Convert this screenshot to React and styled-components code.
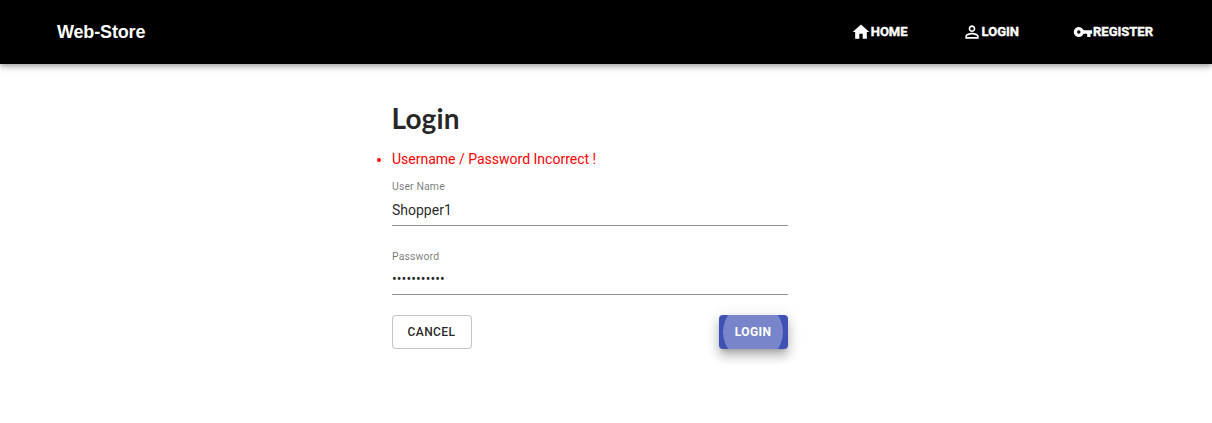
import React from "react";
import styled, { createGlobalStyle } from "styled-components";

const GlobalStyle = createGlobalStyle`
  *, *::before, *::after { box-sizing: border-box; }
  body { margin: 0; min-height: 100vh; background: #fff; color: rgba(0, 0, 0, 0.87); font-family: Roboto, sans-serif; }
`;

const AppBar = styled.header`
  display: flex;
  align-items: center;
  justify-content: space-between;
  height: 64px;
  padding: 0 59px 0 57px;
  background: #000;
  color: #fff;
  box-shadow: 0 2px 4px -1px rgba(0, 0, 0, 0.2), 0 4px 5px 0 rgba(0, 0, 0, 0.14), 0 1px 10px 0 rgba(0, 0, 0, 0.12);
`;

const Brand = styled.a`
  font: bold 18px/24px "Liberation Sans", Arial, sans-serif;
  letter-spacing: -0.15px;
`;

const Nav = styled.nav`
  display: flex;
  gap: 54px;
`;

const NavLink = styled.a`
  display: flex;
  align-items: center;
  font-size: 13px;
  font-weight: 700;
  line-height: 20px;
  text-transform: uppercase;
  -webkit-text-stroke: 0.4px currentColor;
`;

const Icon = styled.svg`
  width: 20px;
  height: 20px;
  fill: currentColor;
`;

const LoginForm = styled.form`
  width: 396px;
  margin: 0 0 0 392px;
  padding: 37px 0 40px;
`;

const Title = styled.h1`
  margin: 0;
  font: bold 28px/34px Lato, sans-serif;
  text-indent: -0.5px;
  letter-spacing: 0.15px;
`;

const Errors = styled.ul`
  margin: 14px 0 10px;
  padding: 0;
  color: #f00;
  font-size: 14px;
  line-height: 20px;
`;

const Field = styled.label`
  display: flex;
  flex-direction: column;
  margin-bottom: ${(p) => p.$gap}px;
`;

const Label = styled.span`
  padding-top: 1px;
  color: rgba(0, 0, 0, 0.54);
  font-size: 10.5px;
  line-height: 14px;
  letter-spacing: 0.1px;
`;

const Input = styled.input`
  height: ${(p) => (p.type === "password" ? 31 : 32)}px;
  padding: ${(p) => (p.type === "password" ? 0 : 1)}px 0 0;
  border: 0;
  border-bottom: 1px solid #949494;
  border-radius: 0;
  outline: 0;
  background: none;
  color: rgba(0, 0, 0, 0.87);
  font: 14px Roboto, sans-serif;
  letter-spacing: ${(p) => (p.type === "password" ? 0.08 : 0)}px;
`;

const Actions = styled.div`
  display: flex;
  justify-content: space-between;
`;

const Button = styled.button`
  position: relative;
  overflow: hidden;
  width: 80px;
  height: 34px;
  padding: 0 1px 0 0;
  border: 1px solid rgba(0, 0, 0, 0.23);
  border-radius: 4px;
  background: #fff;
  color: rgba(0, 0, 0, 0.87);
  font: 500 12px/20px Roboto, sans-serif;
  letter-spacing: 0.4px;
  text-transform: uppercase;
`;

const PrimaryButton = styled(Button)`
  width: 69px;
  border: 0;
  background: #3f51b5;
  color: #fff;
  font-weight: 700;
  box-shadow: 0 5px 5px -3px rgba(0, 0, 0, 0.2), 0 8px 10px 1px rgba(0, 0, 0, 0.14), 0 3px 14px 2px rgba(0, 0, 0, 0.12);
`;

const Ripple = styled.span`
  position: absolute;
  top: 50%;
  left: 50%;
  width: 60px;
  height: 60px;
  margin: -30px 0 0 -30.5px;
  border-radius: 50%;
  background: rgba(255, 255, 255, 0.3);
`;

const links = [
  ["Home", "M10 20v-6h4v6h5v-8h3L12 3 2 12h3v8z"],
  ["Login", "M12 5.9c1.16 0 2.1.94 2.1 2.1s-.94 2.1-2.1 2.1S9.9 9.16 9.9 8s.94-2.1 2.1-2.1m0 9c2.97 0 6.1 1.46 6.1 2.1v1.1H5.9V17c0-.64 3.13-2.1 6.1-2.1M12 4C9.79 4 8 5.79 8 8s1.79 4 4 4 4-1.79 4-4-1.79-4-4-4zm0 9c-2.67 0-8 1.34-8 4v3h16v-3c0-2.66-5.33-4-8-4z"],
  ["Register", "M12.65 10C11.83 7.67 9.61 6 7 6c-3.31 0-6 2.69-6 6s2.69 6 6 6c2.61 0 4.83-1.67 5.65-4H17v4h4v-4h2v-4H12.65zM7 14c-1.1 0-2-.9-2-2s.9-2 2-2 2 .9 2 2-.9 2-2 2z"],
];

export default function App() {
  return (
    <>
      <GlobalStyle />
      <AppBar>
        <Brand>Web-Store</Brand>
        <Nav>
          {links.map(([name, path]) => (
            <NavLink key={name}>
              <Icon viewBox="0 0 24 24"><path d={path} /></Icon>
              {name}
            </NavLink>
          ))}
        </Nav>
      </AppBar>
      <LoginForm>
        <Title>Login</Title>
        <Errors><li>Username / Password Incorrect !</li></Errors>
        <Field $gap={23}>
          <Label>User Name</Label>
          <Input type="text" defaultValue="Shopper1" />
        </Field>
        <Field $gap={20}>
          <Label>Password</Label>
          <Input type="password" defaultValue="password123" />
        </Field>
        <Actions>
          <Button type="button">Cancel</Button>
          <PrimaryButton type="button"><Ripple />Login</PrimaryButton>
        </Actions>
      </LoginForm>
    </>
  );
}
